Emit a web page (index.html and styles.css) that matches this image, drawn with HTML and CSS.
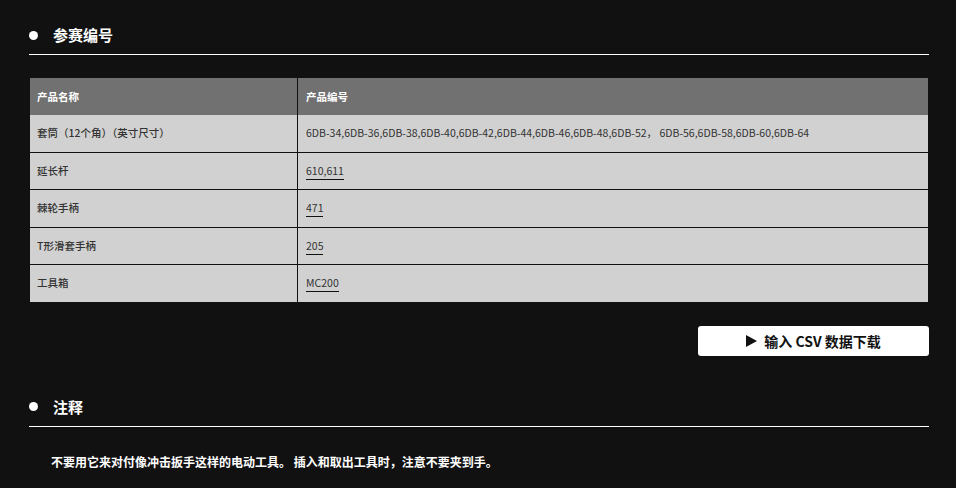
FILE: index.html
```html
<!DOCTYPE html>
<html lang="zh">
<head>
  <meta charset="UTF-8">
  <title>参赛编号</title>
  <link rel="stylesheet" href="styles.css">
</head>
<body>
  <div class="page">
    <section class="block">
      <h2 class="block-title"><span class="dot"></span>参赛编号</h2>

      <table class="spec-table">
        <thead>
          <tr>
            <th class="col-name">产品名称</th>
            <th>产品编号</th>
          </tr>
        </thead>
        <tbody>
          <tr>
            <td class="col-name">套筒（12个角）（英寸尺寸）</td>
            <td>6DB-34,6DB-36,6DB-38,6DB-40,6DB-42,6DB-44,6DB-46,6DB-48,6DB-52， 6DB-56,6DB-58,6DB-60,6DB-64</td>
          </tr>
          <tr>
            <td class="col-name">延长杆</td>
            <td><a href="#">610,611</a></td>
          </tr>
          <tr>
            <td class="col-name">棘轮手柄</td>
            <td><a href="#">471</a></td>
          </tr>
          <tr>
            <td class="col-name">T形滑套手柄</td>
            <td><a href="#">205</a></td>
          </tr>
          <tr>
            <td class="col-name">工具箱</td>
            <td><a href="#">MC200</a></td>
          </tr>
        </tbody>
      </table>

      <div class="actions">
        <a href="#" class="btn-csv">
          <svg class="btn-arrow" width="11" height="12" viewBox="0 0 11 12"><polygon points="0,0 11,6 0,12" fill="#111"/></svg>
          输入 CSV 数据下载
        </a>
      </div>
    </section>

    <section class="block notes">
      <h2 class="block-title"><span class="dot"></span>注释</h2>
      <p class="note-text">不要用它来对付像冲击扳手这样的电动工具。 插入和取出工具时，注意不要夹到手。</p>
    </section>
  </div>
</body>
</html>
```

FILE: styles.css
```css
body {
  margin: 0;
  background-color: #111;
  color: #fff;
  font-family: "Noto Sans CJK SC", "Noto Sans", sans-serif;
}

.page {
  width: 900px;
  padding: 0 0 0 29px;
}

.block-title {
  display: flex;
  align-items: center;
  gap: 15px;
  margin: 0;
  padding: 24px 0 8px;
  line-height: 22px;
  font-size: 15px;
  font-weight: bold;
  color: #fff;
  border-bottom: 1px solid #fff;
}

.dot {
  width: 9px;
  height: 9px;
  border-radius: 50%;
  background: #fff;
}

.spec-table {
  width: 898px;
  margin: 23px 0 0 1px;
  border-collapse: separate;
  border-spacing: 0;
  font-size: 10.5px;
}

.spec-table th {
  background-color: #717171;
  color: #fff;
  font-weight: bold;
  text-align: left;
  height: 37px;
  padding: 0 8px;
  box-sizing: border-box;
}

.spec-table td {
  background-color: #d1d1d1;
  color: #333;
  padding: 10px 8px;
  line-height: 16.6px;
  border-bottom: 1px solid #111;
}

.spec-table .col-name {
  width: 268px;
  box-sizing: border-box;
  padding-left: 7px;
  border-right: 1px solid #111;
}

.spec-table td.col-name {
  font-weight: 500;
  color: #333;
}

.spec-table a {
  color: #333;
  text-decoration: none;
  border-bottom: 1px solid #111;
  padding-bottom: 1px;
}

.actions {
  display: flex;
  justify-content: flex-end;
  margin-top: 23px;
}

.btn-csv {
  display: flex;
  align-items: center;
  justify-content: center;
  gap: 7px;
  width: 231px;
  height: 30px;
  background: #fff;
  color: #111;
  border-radius: 3px;
  font-size: 14px;
  font-weight: bold;
  text-decoration: none;
}

.notes {
  margin-top: 16px;
}

.note-text {
  margin: 26px 0 0;
  padding-left: 22px;
  font-size: 12px;
  line-height: 18px;
  font-weight: bold;
  color: #fff;
}
```
